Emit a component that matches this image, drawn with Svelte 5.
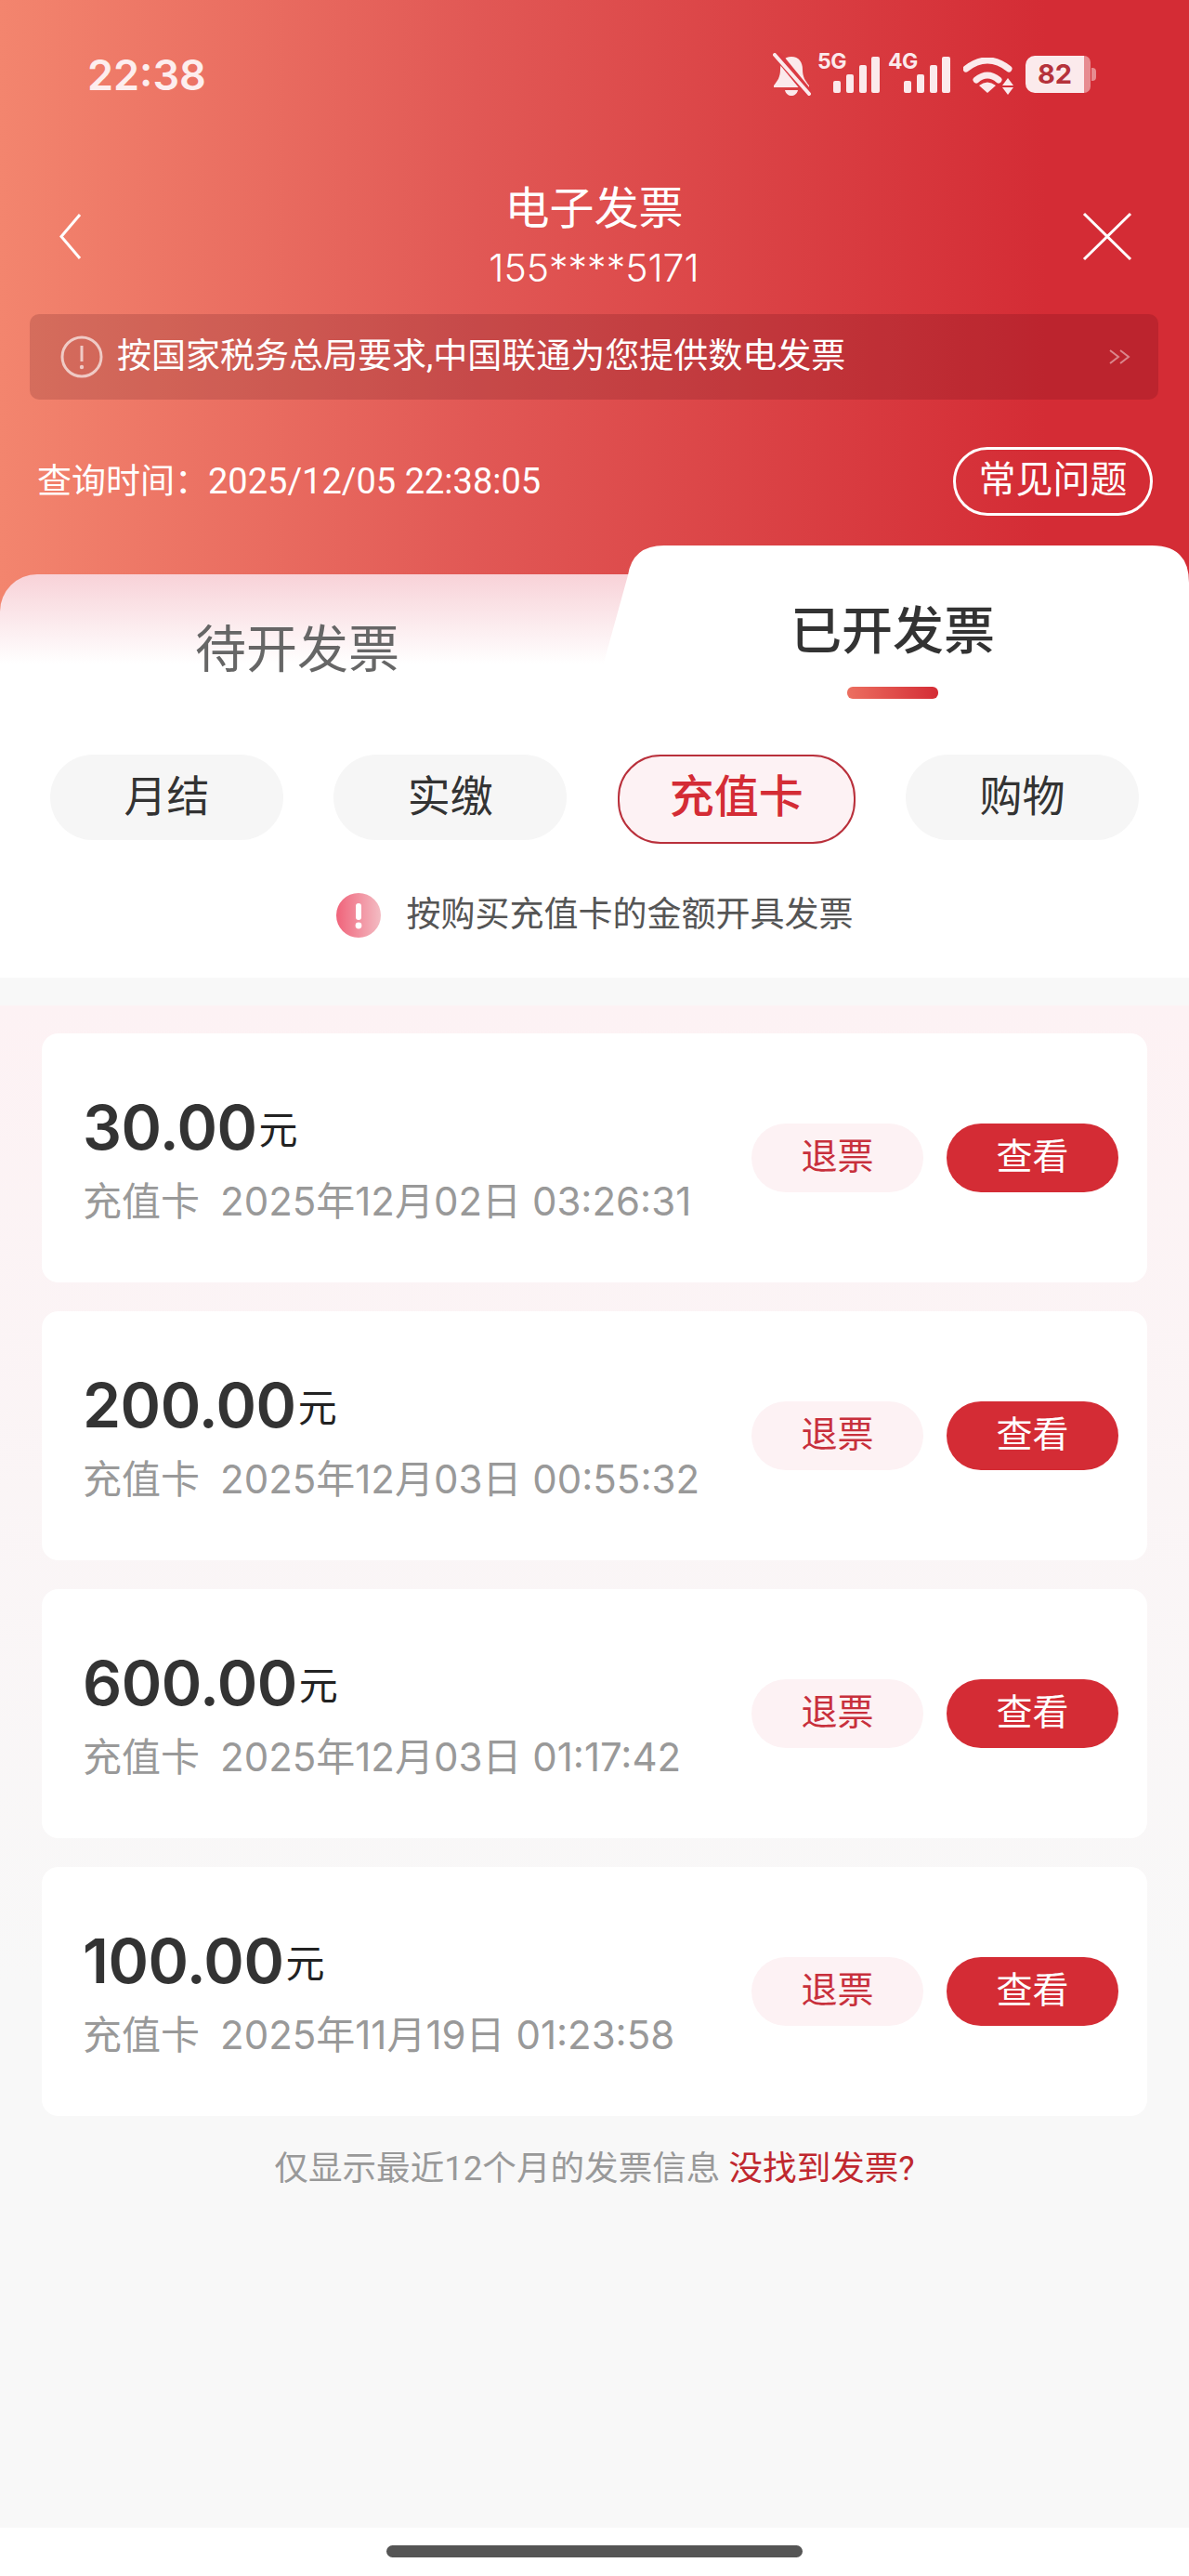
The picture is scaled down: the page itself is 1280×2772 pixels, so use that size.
<script>
	const pills = ['月结', '实缴', '充值卡', '购物'];
	const invoices = [
		{ amount: '30.00', time: '2025年12月02日 03:26:31' },
		{ amount: '200.00', time: '2025年12月03日 00:55:32' },
		{ amount: '600.00', time: '2025年12月03日 01:17:42' },
		{ amount: '100.00', time: '2025年11月19日 01:23:58' },
	];
</script>

{#snippet signal(label)}
	<div class="signal">
		<span class="net">{label}</span>
		<svg width="50" height="39" viewBox="0 0 50 39">
			<rect x="0" y="26" width="8" height="13" rx="2" />
			<rect x="14" y="19" width="8" height="20" rx="2" />
			<rect x="28" y="9" width="8" height="30" rx="2" />
			<rect x="41" y="0" width="9" height="39" rx="2" />
		</svg>
	</div>
{/snippet}

<div class="page">
	<header class="hero">
		<div class="status">
			<div class="clock">22:38</div>
			<div class="status-icons">
				<svg class="bell" width="41" height="46" viewBox="0 0 41 46">
					<path class="bell-body" d="M20 4C12 4 8 10 8 18C8 26 5 30 1 35V37H39V35C35 30 32 26 32 18C32 10 28 4 20 4Z" />
					<path class="bell-body" d="M13 40H27C26 44 23 46 20 46C17 46 14 44 13 40Z" />
					<path class="bell-gap" d="M3 0L40 45" />
					<path class="bell-slash" d="M2 2L39 44" />
				</svg>
				{@render signal('5G')}
				{@render signal('4G')}
				<svg class="wifi" width="54" height="40" viewBox="0 0 54 40">
					<path d="M3 12Q26 -6 49 12" />
					<path d="M14 24Q26 14 38 24" />
					<path class="solid" d="M17 30Q26 23 35 30L26 38Z" />
					<path class="solid" d="M48 22L54 30H42Z" />
					<path class="solid" d="M42 32H54L48 40Z" />
				</svg>
				<div class="battery">
					<div class="battery-level">82</div>
					<div class="battery-rest"></div>
					<div class="battery-nub"></div>
				</div>
			</div>
		</div>

		<div class="nav">
			<svg width="25" height="51" viewBox="0 0 25 51">
				<path d="M23 2L3 25.5L23 49" />
			</svg>
			<div class="nav-title">
				<div class="title">电子发票</div>
				<div class="phone">155****5171</div>
			</div>
			<svg width="54" height="53" viewBox="0 0 54 53">
				<path d="M2 2L52 51M52 2L2 51" />
			</svg>
		</div>

		<div class="banner">
			<svg width="46" height="46" viewBox="0 0 46 46">
				<circle cx="23" cy="23" r="21" />
				<path d="M23 11V28" />
				<circle class="dot" cx="23" cy="34" r="2.2" />
			</svg>
			<span class="banner-text">按国家税务总局要求,中国联通为您提供数电发票</span>
			<svg class="more" width="26" height="16" viewBox="0 0 26 16">
				<path d="M2 1L11 8L2 15M13 1L22 8L13 15" />
			</svg>
		</div>

		<div class="query">
			<div class="query-time">查询时间：<span>2025/12/05 22:38:05</span></div>
			<div class="faq">常见问题</div>
		</div>

		<div class="tabs">
			<div class="tab tab-left">待开发票</div>
			<div class="tab tab-right">
				<div>已开发票</div>
				<div class="tab-bar"></div>
			</div>
		</div>
	</header>

	<section class="filters">
		<div class="pills">
			{#each pills as pill (pill)}
				<div class="pill" class:active={pill === '充值卡'}>{pill}</div>
			{/each}
		</div>
		<div class="note">
			<svg width="48" height="48" viewBox="0 0 48 48">
				<defs>
					<linearGradient id="note-fill" x1="0" x2="1" y1="0" y2="0">
						<stop offset="0" stop-color="#f0637a" />
						<stop offset="1" stop-color="#f3bcc3" />
					</linearGradient>
				</defs>
				<circle cx="24" cy="24" r="24" fill="url(#note-fill)" />
				<rect x="21" y="11" width="6" height="18" rx="3" fill="#fff" />
				<circle cx="24" cy="35" r="3.4" fill="#fff" />
			</svg>
			<span>按购买充值卡的金额开具发票</span>
		</div>
	</section>

	<main class="list">
		<div class="cards">
			{#each invoices as item (item.time)}
				<div class="card">
					<div class="card-info">
						<div class="amount">{item.amount}<span class="unit">元</span></div>
						<div class="meta"><span class="kind">充值卡</span>{item.time}</div>
					</div>
					<div class="actions">
						<div class="btn btn-light">退票</div>
						<div class="btn btn-solid">查看</div>
					</div>
				</div>
			{/each}
		</div>
		<div class="footnote">仅显示最近12个月的发票信息 <span>没找到发票?</span></div>
	</main>

	<div class="home"><div class="home-bar"></div></div>
</div>

<style>
	:global(body) {
		background: #f8f8f8;
	}

	.page {
		width: 1280px;
		height: 2772px;
		display: flex;
		flex-direction: column;
		background: #f8f8f8;
		font-family: Roboto, 'Noto Sans CJK SC', sans-serif;
	}

	.hero {
		background: linear-gradient(90deg, #f3856e 0, #e15855 40%, #d42c35 88%);
		color: #fff;
	}

	.status {
		height: 197px;
		padding: 56px 100px 0 94px;
		box-sizing: border-box;
		display: flex;
		justify-content: space-between;
		align-items: flex-start;
	}

	.clock {
		font-family: Inter, sans-serif;
		font-size: 45px;
		font-weight: 600;
		line-height: 50px;
		color: #fdeeee;
	}

	.status-icons {
		display: flex;
		align-items: flex-start;
		color: #fbeaec;
	}

	.bell {
		margin-top: 1px;
		margin-right: 7px;
	}

	.bell-body {
		fill: #fbeaec;
	}

	.bell-gap {
		stroke: #db3a43;
		stroke-width: 9;
		fill: none;
	}

	.bell-slash {
		stroke: #fbeaec;
		stroke-width: 4;
		stroke-linecap: round;
		fill: none;
	}

	.signal {
		position: relative;
		width: 76px;
		height: 44px;
	}

	.signal svg {
		position: absolute;
		left: 17px;
		top: 5px;
		fill: #fbeaec;
	}

	.net {
		position: absolute;
		left: 0;
		top: -2px;
		font-family: Inter, sans-serif;
		font-size: 23px;
		font-weight: 700;
		line-height: 24px;
		letter-spacing: -0.5px;
	}

	.wifi {
		margin-left: 5px;
		margin-top: 6px;
		fill: none;
		stroke: #fbeaec;
		stroke-width: 7;
		stroke-linecap: round;
	}

	.wifi .solid {
		fill: #fbeaec;
		stroke: none;
	}

	.battery {
		display: flex;
		align-items: center;
		height: 40px;
		margin-left: 13px;
		margin-top: 4px;
	}

	.battery-level {
		width: 63px;
		height: 40px;
		background: #fbeaec;
		border-radius: 10px 0 0 10px;
		color: #b5323b;
		font-family: Inter, sans-serif;
		font-size: 29px;
		font-weight: 700;
		line-height: 40px;
		text-align: center;
	}

	.battery-rest {
		width: 7px;
		height: 40px;
		background: rgba(255, 255, 255, 0.45);
		border-radius: 0 8px 8px 0;
	}

	.battery-nub {
		width: 5px;
		height: 14px;
		margin-left: 1px;
		background: rgba(255, 255, 255, 0.45);
		border-radius: 0 4px 4px 0;
	}

	.nav {
		display: flex;
		justify-content: space-between;
		align-items: center;
		padding: 0 61px 0 63px;
	}

	.nav svg {
		fill: none;
		stroke: #fff;
		stroke-width: 3;
		margin-top: -2px;
	}

	.nav-title {
		text-align: center;
		margin-left: 26px;
	}

	.title {
		font-size: 48px;
		line-height: 56px;
	}

	.phone {
		margin-top: 10px;
		font-family: Inter, sans-serif;
		font-size: 41px;
		font-weight: 300;
		line-height: 50px;
	}

	.banner {
		height: 92px;
		margin: 25px 33px 0 32px;
		padding: 0 28px 0 33px;
		display: flex;
		align-items: center;
		border-radius: 10px;
		background: rgba(60, 0, 10, 0.16);
	}

	.banner svg {
		fill: none;
		stroke: rgba(255, 255, 255, 0.65);
		stroke-width: 3;
		flex: none;
	}

	.banner .dot {
		fill: rgba(255, 255, 255, 0.65);
		stroke: none;
	}

	.banner-text {
		margin-left: 15px;
		font-size: 37px;
		line-height: 50px;
		flex: 1;
	}

	.banner svg.more {
		stroke: rgba(255, 255, 255, 0.45);
		stroke-width: 2;
	}

	.query {
		margin-top: 51px;
		padding: 0 39px 0 40px;
		display: flex;
		justify-content: space-between;
		align-items: center;
	}

	.query-time {
		font-size: 37px;
		line-height: 50px;
	}

	.query-time span {
		font-size: 38px;
		margin-left: -1px;
	}

	.faq {
		width: 215px;
		height: 74px;
		box-sizing: border-box;
		border: 3px solid #fff;
		border-radius: 37px;
		font-size: 40px;
		line-height: 66px;
		text-align: center;
	}

	.tabs {
		display: flex;
		margin-top: 32px;
		height: 173px;
	}

	.tab {
		box-sizing: border-box;
		font-size: 55px;
		line-height: 55px;
		text-align: center;
	}

	.tab-left {
		width: 700px;
		margin-top: 31px;
		padding: 54px 60px 0 0;
		flex: none;
		color: #666;
		border-top-left-radius: 40px;
		background: linear-gradient(180deg, #f8d2d8 0, #fff 68%);
	}

	.tab-right {
		width: 630px;
		margin-left: -50px;
		padding: 65px 8px 0 0;
		flex: none;
		color: #333;
		font-weight: 500;
		background: #fff;
		clip-path: path('M0 173V126L26 32Q31 0 65 0H590Q630 0 630 40V173Z');
	}

	.tab-bar {
		width: 98px;
		height: 13px;
		margin: 32px auto 0;
		border-radius: 6px;
		background: linear-gradient(90deg, #ec6f60, #d42c35);
	}

	.filters {
		background: #fff;
		padding: 52px 54px 43px;
	}

	.pills {
		display: flex;
		justify-content: space-between;
		align-items: flex-start;
	}

	.pill {
		width: 251px;
		height: 92px;
		border-radius: 46px;
		background: #f6f6f6;
		color: #333;
		font-size: 46px;
		line-height: 90px;
		text-align: center;
	}

	.pill.active {
		width: 256px;
		height: 96px;
		box-sizing: border-box;
		border: 2px solid #b9303b;
		background: #fdf2f4;
		color: #d42c35;
		font-size: 48px;
		font-weight: 500;
		line-height: 88px;
	}

	.note {
		margin-top: 53px;
		display: flex;
		justify-content: center;
		align-items: center;
		gap: 28px;
		font-size: 37px;
		line-height: 48px;
		color: #555;
	}

	.list {
		flex: 1;
		padding-top: 30px;
	}

	.cards {
		display: flex;
		flex-direction: column;
		gap: 31px;
		padding: 30px 45px 0;
		background: linear-gradient(180deg, #fdf2f4 0, #f8f8f8 88%);
	}

	.card {
		height: 268px;
		padding: 0 31px 0 44px;
		display: flex;
		justify-content: space-between;
		align-items: center;
		background: #fff;
		border-radius: 18px;
	}

	.amount {
		font-family: Inter, sans-serif;
		font-size: 66px;
		font-weight: 600;
		line-height: 76px;
		color: #333;
		letter-spacing: -0.5px;
	}

	.unit {
		margin-left: 2px;
		font-family: 'Noto Sans CJK SC', sans-serif;
		font-size: 42px;
		font-weight: 400;
		line-height: 1;
		color: #222;
		letter-spacing: 0;
		vertical-align: 6px;
	}

	.meta {
		margin-top: 17px;
		font-family: Inter, 'Noto Sans CJK SC', sans-serif;
		font-size: 42px;
		line-height: 50px;
		color: #999;
	}

	.kind {
		margin-right: 22px;
	}

	.actions {
		display: flex;
		gap: 25px;
	}

	.btn {
		width: 185px;
		height: 74px;
		border-radius: 37px;
		font-size: 39px;
		line-height: 72px;
		text-align: center;
	}

	.btn-light {
		background: #fdf2f4;
		color: #c8303c;
	}

	.btn-solid {
		background: #d42c35;
		color: #fff;
	}

	.footnote {
		margin-top: 32px;
		font-size: 36.6px;
		line-height: 50px;
		text-align: center;
		color: #999;
	}

	.footnote span {
		color: #c0282f;
	}

	.home {
		height: 52px;
		padding-top: 19px;
		box-sizing: border-box;
		background: #fff;
	}

	.home-bar {
		width: 448px;
		height: 13px;
		margin: 0 auto;
		border-radius: 7px;
		background: #555;
	}
</style>
